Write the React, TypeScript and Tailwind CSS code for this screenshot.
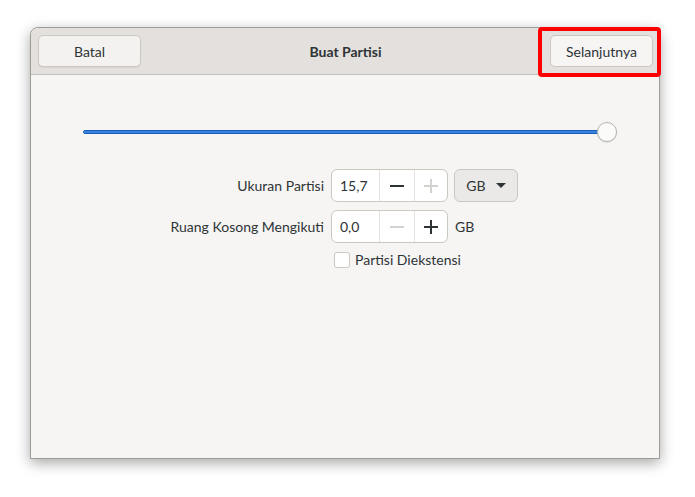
import React from "react";

const font = { fontFamily: 'Lato, "Noto Sans", sans-serif' };

function Minus({ on }: { on: boolean }) {
  return (
    <svg width="16" height="16" viewBox="0 0 16 16">
      <rect x="1" y="7" width="14" height="2" fill={on ? "#2e3436" : "#d3d2cf"} />
    </svg>
  );
}
function Plus({ on }: { on: boolean }) {
  return (
    <svg width="16" height="16" viewBox="0 0 16 16">
      <rect x="1" y="7" width="14" height="2" fill={on ? "#2e3436" : "#d3d2cf"} />
      <rect x="7" y="1" width="2" height="14" fill={on ? "#2e3436" : "#d3d2cf"} />
    </svg>
  );
}

function Spin({ value, minusOn, plusOn }: { value: string; minusOn: boolean; plusOn: boolean }) {
  return (
    <div className="flex h-[33px] w-[117px] rounded-[6px] border border-[#cdc7c2] bg-white">
      <div className="flex w-[47px] items-center pl-[8px] text-[14px] text-[#2e3436]">{value}</div>
      <div className="flex w-[35px] items-center justify-center border-l border-[#e4e1de]">
        <Minus on={minusOn} />
      </div>
      <div className="flex flex-1 items-center justify-center border-l border-[#e4e1de]">
        <Plus on={plusOn} />
      </div>
    </div>
  );
}

export default function App() {
  return (
    <div className="h-[497px] w-[695px] bg-white pl-[30px] pt-[27px]" style={font}>
      <div className="relative flex h-[432px] w-[630px] flex-col rounded-t-[8px] border border-[#9e9b97] bg-[#f6f5f4] shadow-[0_4px_14px_rgba(0,0,0,0.35)]">
        <div className="flex h-[47px] items-center justify-between rounded-t-[8px] border-b border-[#c2bfba] bg-[#e3e0dd] pl-[7px] pr-[6px]">
          <div className="flex h-[32px] w-[103px] items-center justify-center rounded-[5px] border border-[#cdc7c2] bg-[#f3f2f0] text-[14px] text-[#2e3436] shadow-[0_1px_1px_rgba(0,0,0,0.06)]">
            Batal
          </div>
          <div className="text-[14px] font-bold text-[#2e3436]">Buat Partisi</div>
          <div className="flex h-[32px] w-[103px] items-center justify-center rounded-[5px] border border-[#cdc7c2] bg-[#f6f5f4] text-[14px] text-[#2e3436]">
            Selanjutnya
          </div>
        </div>
        <div className="flex flex-col">
          <div className="relative ml-[52px] mt-[47px] flex h-[20px] w-[535px] items-center">
            <div className="h-[4px] w-[525px] rounded-full border border-[#1b5fb0] bg-[#3584e4]" />
            <div className="absolute left-[514px] top-0 h-[20px] w-[20px] rounded-full border border-[#b6b3ae] bg-[#fbfbfa] shadow-[0_1px_1px_rgba(0,0,0,0.1)]" />
          </div>
          <div className="mt-[27px] flex items-center">
            <div className="w-[300px] pr-[7px] text-right text-[14px] text-[#2e3436]">Ukuran Partisi</div>
            <Spin value="15,7" minusOn={true} plusOn={false} />
            <div className="ml-[6px] flex h-[33px] w-[64px] items-center justify-center gap-[10px] rounded-[6px] border border-[#cdc7c2] bg-[#ebe9e7] text-[14px] text-[#2e3436]">
              <span>GB</span>
              <svg width="10" height="6" viewBox="0 0 10 6">
                <path d="M0 0 L10 0 L5 5 Z" fill="#2e3436" />
              </svg>
            </div>
          </div>
          <div className="mt-[8px] flex items-center">
            <div className="w-[300px] pr-[7px] text-right text-[14px] text-[#2e3436]">Ruang Kosong Mengikuti</div>
            <Spin value="0,0" minusOn={false} plusOn={true} />
            <div className="ml-[7px] text-[14px] text-[#2e3436]">GB</div>
          </div>
          <div className="ml-[303px] mt-[6px] flex items-center gap-[5px]">
            <div className="h-[16px] w-[16px] rounded-[3px] border border-[#cdc7c2] bg-white" />
            <span className="text-[14px] text-[#2e3436]">Partisi Diekstensi</span>
          </div>
        </div>
        <div className="absolute left-[507px] top-[-1px] h-[50px] w-[123px] rounded-[4px] border-[4px] border-[#ff0000]" />
      </div>
    </div>
  );
}
